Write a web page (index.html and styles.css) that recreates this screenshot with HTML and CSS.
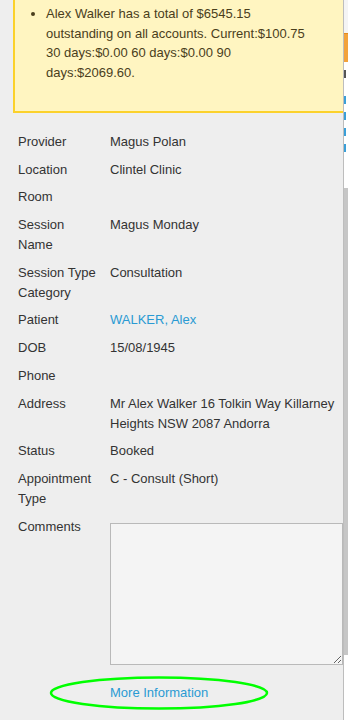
FILE: index.html
```html
<!DOCTYPE html>
<html>
  <head>
    <title>Appointment details</title>
    <link rel="stylesheet" href="styles.css">
  </head>
  <body>
    <div class="page">
      <div class="panel">
        <div class="notice">
          <ul>
            <li>Alex Walker has a total of $6545.15<br>outstanding on all accounts. Current:$100.75<br>30 days:$0.00 60 days:$0.00 90<br>days:$2069.60.</li>
          </ul>
        </div>

        <div class="details">
          <div class="label">Provider</div>
          <div class="value">Magus Polan</div>

          <div class="label">Location</div>
          <div class="value">Clintel Clinic</div>

          <div class="label">Room</div>
          <div class="value"></div>

          <div class="label">Session Name</div>
          <div class="value">Magus Monday</div>

          <div class="label">Session Type Category</div>
          <div class="value">Consultation</div>

          <div class="label">Patient</div>
          <div class="value"><a href="#">WALKER, Alex</a></div>

          <div class="label">DOB</div>
          <div class="value">15/08/1945</div>

          <div class="label">Phone</div>
          <div class="value"></div>

          <div class="label">Address</div>
          <div class="value">Mr Alex Walker 16 Tolkin Way Killarney Heights NSW 2087 Andorra</div>

          <div class="label">Status</div>
          <div class="value">Booked</div>

          <div class="label">Appointment Type</div>
          <div class="value">C - Consult (Short)</div>

          <div class="label">Comments</div>
          <div class="value"><textarea class="comments"></textarea></div>
        </div>

        <div class="more">
          <a href="#">More Information</a>
          <!-- hand drawn highlight round the link -->
          <svg class="highlight" width="222" height="36" viewBox="0 0 222 36">
            <ellipse cx="111" cy="18" rx="108" ry="15.5" fill="none" stroke="#00ff00" stroke-width="2.5"/>
          </svg>
        </div>
      </div>

      <!-- the page behind the panel, only a sliver shows -->
      <div class="behind">
        <div class="behind-top"></div>
        <div class="behind-bar"></div>
        <div class="behind-list">
          <span class="dark"></span>
          <span class="blue"></span>
          <span class="blue"></span>
          <span class="blue"></span>
          <span class="blue"></span>
        </div>
        <div class="behind-scroll"></div>
      </div>
    </div>
  </body>
</html>
```

FILE: styles.css
```css
body {
  margin: 0;
  font-family: "Liberation Sans", Arial, sans-serif;
  font-size: 13px;
  color: #333;
  background-color: #eeeeee;
}

a {
  color: #2a9ad3;
  text-decoration: none;
}

.page {
  display: flex;
  height: 720px;
  overflow: hidden;
}

.panel {
  width: 343px;
  flex-shrink: 0;
  border-right: 1px solid #bdbdbd;
  background-color: #eeeeee;
}

.notice {
  margin-left: 13px;
  padding: 4px 10px 29px 0;
  background-color: #fff5c1;
  border-left: 2px solid #fbd12b;
  border-bottom: 2px solid #fbd12b;
  color: #4a3e1c;
  line-height: 19.5px;
}

.notice ul {
  margin: 0;
  padding-left: 31px;
}

.details {
  display: grid;
  grid-template-columns: 92px 1fr;
  margin-top: 15px;
  padding-left: 18px;
  line-height: 20px;
}

.label,
.value {
  padding: 4px 0 3.7px 0;
}

.label {
  padding-right: 8px;
}

.comments {
  display: block;
  box-sizing: border-box;
  width: 233px;
  height: 142px;
  margin: 6px 0 0 0;
  border: 1px solid #b9b9b9;
  background-color: #f4f4f4;
}

.more {
  position: relative;
  padding: 15px 0 12px 110px;
  line-height: 20px;
}

.highlight {
  position: absolute;
  left: 48px;
  top: 7px;
}

.behind {
  flex: 1;
  background-color: #ffffff;
}

.behind-top {
  height: 33px;
  background-color: #f4f4f4;
}

.behind-bar {
  height: 29px;
  background-color: #f2a23a;
  border-top: 1px solid #e08a20;
  box-sizing: border-box;
}

.behind-list {
  height: 126px;
  padding-top: 8px;
  box-sizing: border-box;
}

.behind-list span {
  display: block;
  width: 2px;
  height: 8px;
  margin-bottom: 8px;
}

.behind-list .dark {
  background-color: #555;
  margin-bottom: 18px;
}

.behind-list .blue {
  background-color: #3a9fd8;
}

.behind-scroll {
  height: 467px;
  background-color: #c6c6c6;
}
```
